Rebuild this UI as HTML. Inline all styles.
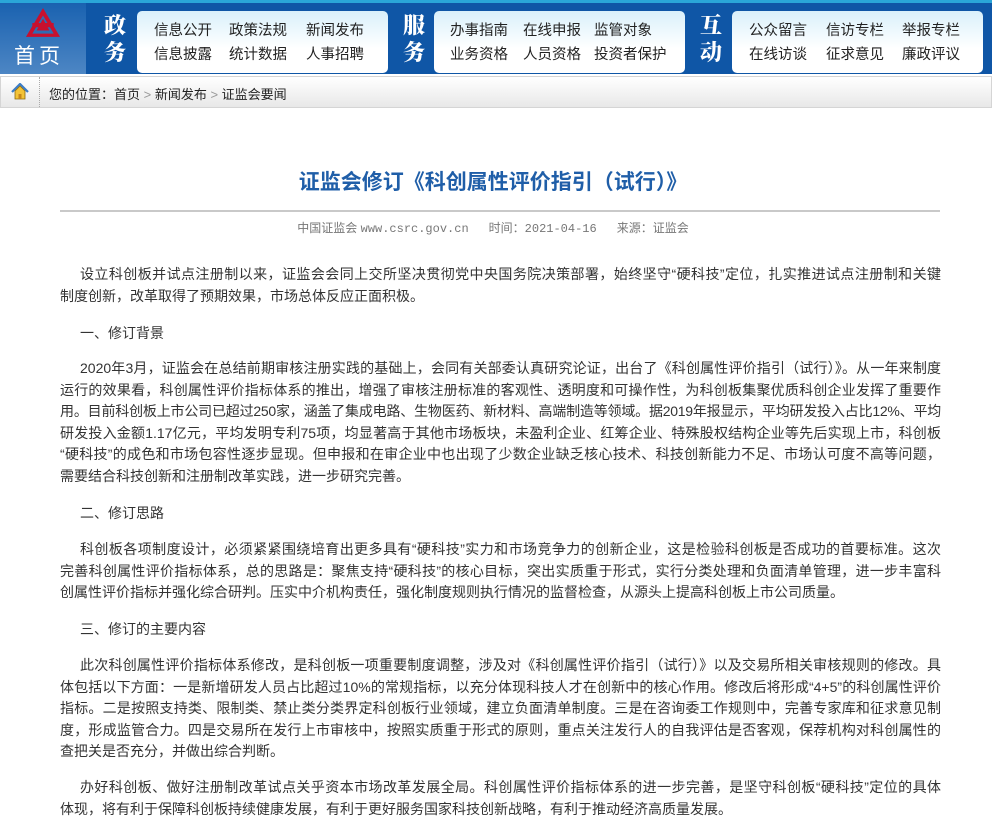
<!DOCTYPE html><html><head><meta charset="utf-8"><style>
*{margin:0;padding:0;box-sizing:border-box}
body{width:1000px;height:834px;background:#fff;font-family:"Liberation Sans","Noto Sans CJK SC",sans-serif;position:relative;overflow:hidden}
.top{position:absolute;left:0;top:0;width:992px;height:74px;background:#0f56a6;border-top:3px solid #2aa6d8}
.home{position:absolute;left:0;top:0;width:86px;height:71px;background:linear-gradient(#1a62b0,#4d86c4)}
.home .t{position:absolute;left:14px;top:37px;color:#fff;font-size:21px;letter-spacing:4px}
.lab{position:absolute;color:#fff;font-family:"Noto Serif CJK SC",serif;font-weight:900;font-size:22px;line-height:27px;width:26px}
.panel{position:absolute;top:8px;height:62px;background:linear-gradient(#d9f0fb,#fff 60%);border-radius:5px}
.panel span{position:absolute;font-size:14.5px;color:#222;white-space:nowrap}
.bc{position:absolute;left:0;top:76px;width:992px;height:32px;background:linear-gradient(#fff,#e8e8e8);border:1px solid #d5d5d5}
.bc .s{position:absolute;left:38px;top:0;height:30px;border-left:1px dotted #aaa}
.bc .x{position:absolute;left:48px;top:7px;font-size:13px;color:#222}
h1{position:absolute;left:0;width:986px;top:166px;text-align:center;font-size:21px;color:#1f5ea8;font-weight:bold}
.hr{position:absolute;left:60px;top:210px;width:880px;height:2px;background:#c9c9c9}
.meta{position:absolute;left:0;width:986px;top:219px;text-align:center;font-size:12px;color:#777}
.c{position:absolute;left:60px;width:881px;font-size:14px;color:#333;line-height:21.6px}
.c div{text-align:justify;text-align-last:justify;height:21.6px;overflow:hidden}
.c div.l{text-align-last:left}
.c div.i{padding-left:20px}
.c div.t{letter-spacing:-0.3px}
.h{position:absolute;left:80px;font-size:14px;color:#333}
</style></head><body>
<div class="top">
<div class="home">
<svg style="position:absolute;left:24px;top:4px" width="38" height="32" viewBox="0 0 34 30"><path d="M17 1 L33 28 L1 28 Z" fill="#c8102e"/><path d="M17 8 L27 25 L7 25 Z" fill="#2f6bb3"/><rect x="7" y="15" width="20" height="4" fill="#c8102e"/><path d="M17 11 L23 22 L11 22Z" fill="#c8102e"/></svg>
<div class="t">首页</div></div>
<div class="lab" style="left:104px;top:8px">政务</div>
<div class="panel" style="left:137px;width:251px"><span style="left:17px;top:8px">信息公开</span><span style="left:92px;top:8px">政策法规</span><span style="left:169px;top:8px">新闻发布</span><span style="left:17px;top:32px">信息披露</span><span style="left:92px;top:32px">统计数据</span><span style="left:169px;top:32px">人事招聘</span></div>
<div class="lab" style="left:403px;top:8px">服务</div>
<div class="panel" style="left:434px;width:251px"><span style="left:16px;top:8px">办事指南</span><span style="left:89px;top:8px">在线申报</span><span style="left:160px;top:8px">监管对象</span><span style="left:16px;top:32px">业务资格</span><span style="left:89px;top:32px">人员资格</span><span style="left:160px;top:32px">投资者保护</span></div>
<div class="lab" style="left:700px;top:8px">互动</div>
<div class="panel" style="left:732px;width:251px"><span style="left:17px;top:8px">公众留言</span><span style="left:94px;top:8px">信访专栏</span><span style="left:170px;top:8px">举报专栏</span><span style="left:17px;top:32px">在线访谈</span><span style="left:94px;top:32px">征求意见</span><span style="left:170px;top:32px">廉政评议</span></div>
</div>
<div class="bc">
<svg style="position:absolute;left:10px;top:6px" width="18" height="17" viewBox="0 0 18 17"><path d="M1 9 L9 1 L17 9" fill="none" stroke="#3a7cc8" stroke-width="2.2"/><path d="M4 8 L9 3 L14 8 V16 H4Z" fill="#f3c338" stroke="#8a6a10" stroke-width=".8"/><rect x="7.5" y="11" width="3" height="5" fill="#c4861a"/></svg>
<div class="s"></div>
<div class="x">您的位置：首页 <span style="color:#999">&gt;</span> 新闻发布 <span style="color:#999">&gt;</span> 证监会要闻</div></div>
<h1>证监会修订《科创属性评价指引（试行）》</h1>
<div class="hr"></div>
<div class="meta">中国证监会 <span style="font-family:'Liberation Mono',monospace">www.csrc.gov.cn</span> &nbsp;&nbsp;&nbsp;&nbsp;&nbsp;时间：<span style="font-family:'Liberation Mono',monospace">2021-04-16</span> &nbsp;&nbsp;&nbsp;&nbsp;&nbsp;来源：证监会</div>
<div class="c" style="top:264px"><div class="i">设立科创板并试点注册制以来，证监会会同上交所坚决贯彻党中央国务院决策部署，始终坚守“硬科技”定位，扎实推进试点注册制和关键</div><div class="l">制度创新，改革取得了预期效果，市场总体反应正面积极。</div></div>
<div class="h" style="top:323px">一、修订背景</div>
<div class="c" style="top:358px"><div class="i">2020年3月，证监会在总结前期审核注册实践的基础上，会同有关部委认真研究论证，出台了《科创属性评价指引（试行）》。从一年来制度</div><div>运行的效果看，科创属性评价指标体系的推出，增强了审核注册标准的客观性、透明度和可操作性，为科创板集聚优质科创企业发挥了重要作</div><div class="t">用。目前科创板上市公司已超过250家，涵盖了集成电路、生物医药、新材料、高端制造等领域。据2019年报显示，平均研发投入占比12%、平均</div><div>研发投入金额1.17亿元，平均发明专利75项，均显著高于其他市场板块，未盈利企业、红筹企业、特殊股权结构企业等先后实现上市，科创板</div><div>“硬科技”的成色和市场包容性逐步显现。但申报和在审企业中也出现了少数企业缺乏核心技术、科技创新能力不足、市场认可度不高等问题，</div><div class="l">需要结合科技创新和注册制改革实践，进一步研究完善。</div></div>
<div class="h" style="top:503px">二、修订思路</div>
<div class="c" style="top:539px"><div class="i">科创板各项制度设计，必须紧紧围绕培育出更多具有“硬科技”实力和市场竞争力的创新企业，这是检验科创板是否成功的首要标准。这次</div><div>完善科创属性评价指标体系，总的思路是：聚焦支持“硬科技”的核心目标，突出实质重于形式，实行分类处理和负面清单管理，进一步丰富科</div><div class="l">创属性评价指标并强化综合研判。压实中介机构责任，强化制度规则执行情况的监督检查，从源头上提高科创板上市公司质量。</div></div>
<div class="h" style="top:619px">三、修订的主要内容</div>
<div class="c" style="top:655px"><div class="i">此次科创属性评价指标体系修改，是科创板一项重要制度调整，涉及对《科创属性评价指引（试行）》以及交易所相关审核规则的修改。具</div><div>体包括以下方面：一是新增研发人员占比超过10%的常规指标，以充分体现科技人才在创新中的核心作用。修改后将形成“4+5”的科创属性评价</div><div>指标。二是按照支持类、限制类、禁止类分类界定科创板行业领域，建立负面清单制度。三是在咨询委工作规则中，完善专家库和征求意见制</div><div>度，形成监管合力。四是交易所在发行上市审核中，按照实质重于形式的原则，重点关注发行人的自我评估是否客观，保荐机构对科创属性的核</div><div class="l">查把关是否充分，并做出综合判断。</div></div>
<div class="c" style="top:777px"><div class="i">办好科创板、做好注册制改革试点关乎资本市场改革发展全局。科创属性评价指标体系的进一步完善，是坚守科创板“硬科技”定位的具体</div><div class="l">体现，将有利于保障科创板持续健康发展，有利于更好服务国家科技创新战略，有利于推动经济高质量发展。</div></div>
</body></html>
